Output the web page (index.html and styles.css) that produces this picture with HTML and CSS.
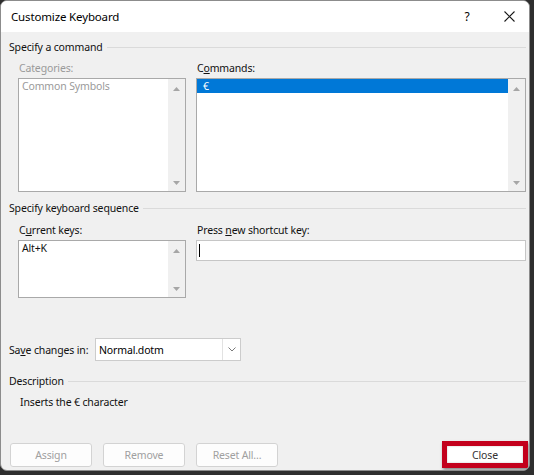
FILE: index.html
```html
<!DOCTYPE html>
<html>
<head>
<meta charset="utf-8">
<link rel="stylesheet" href="styles.css">
</head>
<body>
<div class="window">
  <div class="titlebar">
    <span class="title">Customize Keyboard</span>
    <span class="help">?</span>
    <span class="closex"><svg width="11" height="11" viewBox="0 0 11 11"><path d="M0.5 0.5L10.5 10.5M10.5 0.5L0.5 10.5" stroke="#1a1a1a" stroke-width="1.1" fill="none"/></svg></span>
  </div>
  <div class="content">
    <div class="group g1"><span>Specify a command</span><div class="rule"></div></div>
    <div class="cols">
      <div class="col left">
        <div class="label disabled">Categories:</div>
        <div class="listbox tall">
          <div class="items"><div class="item disabled">Common Symbols</div></div>
          <div class="scroll">
            <svg width="7" height="4" viewBox="0 0 7 4"><path d="M0 4L3.5 0L7 4Z" fill="#a6a6a6"/></svg>
            <svg width="7" height="4" viewBox="0 0 7 4"><path d="M0 0L3.5 4L7 0Z" fill="#a6a6a6"/></svg>
          </div>
        </div>
      </div>
      <div class="col right">
        <div class="label">C<u>o</u>mmands:</div>
        <div class="listbox tall">
          <div class="items"><div class="item sel">€</div></div>
          <div class="scroll">
            <svg width="7" height="4" viewBox="0 0 7 4"><path d="M0 4L3.5 0L7 4Z" fill="#a6a6a6"/></svg>
            <svg width="7" height="4" viewBox="0 0 7 4"><path d="M0 0L3.5 4L7 0Z" fill="#a6a6a6"/></svg>
          </div>
        </div>
      </div>
    </div>
    <div class="group g2"><span>Specify keyboard sequence</span><div class="rule"></div></div>
    <div class="cols">
      <div class="col left">
        <div class="label l2">C<u>u</u>rrent keys:</div>
        <div class="listbox short">
          <div class="items"><div class="item">Alt+K</div></div>
          <div class="scroll">
            <svg width="7" height="4" viewBox="0 0 7 4"><path d="M0 4L3.5 0L7 4Z" fill="#a6a6a6"/></svg>
            <svg width="7" height="4" viewBox="0 0 7 4"><path d="M0 0L3.5 4L7 0Z" fill="#a6a6a6"/></svg>
          </div>
        </div>
      </div>
      <div class="col right">
        <div class="label l2">Press <u>n</u>ew shortcut key:</div>
        <div class="input"><span class="caret"></span></div>
      </div>
    </div>
    <div class="saverow">
      <span class="savelabel">Sa<u>v</u>e changes in:</span>
      <div class="dropdown">
        <span class="ddtext">Normal.dotm</span>
        <span class="ddbtn"><svg width="8" height="5" viewBox="0 0 8 5"><path d="M0.5 0.5L4 4L7.5 0.5" stroke="#7a7a7a" stroke-width="1" fill="none"/></svg></span>
      </div>
    </div>
    <div class="group g3"><span>Description</span><div class="rule"></div></div>
    <div class="desc">Inserts the € character</div>
    <div class="buttons">
      <button class="btn disabled">Assign</button>
      <button class="btn disabled">Remove</button>
      <button class="btn disabled">Reset All...</button>
      <div class="highlight"><button class="btn close">Close</button></div>
    </div>
  </div>
</div>
</body>
</html>
```

FILE: styles.css
```css
html, body {
  margin: 0;
  padding: 0;
}
body {
  width: 534px;
  height: 475px;
  background: #2e2e2e;
  font-family: "Noto Sans", "DejaVu Sans", sans-serif;
  font-size: 10.5px;
  letter-spacing: -0.15px;
  color: #111;
  overflow: hidden;
}
.window {
  width: 528px;
  height: 469px;
  background: #f0f0f0;
  border: 1px solid #8c8c8c;
  border-radius: 7px;
  overflow: hidden;
}
.titlebar {
  height: 31px;
  background: #ffffff;
  display: flex;
  align-items: center;
}
.title {
  font-size: 11.5px;
  padding-left: 10px;
  flex: 1;
  color: #000;
  margin-top: -1px;
}
.help {
  font-size: 12px;
  width: 14px;
  text-align: center;
  margin-right: 30px;
  color: #000;
}
.closex {
  display: flex;
  margin-right: 14px;
}
.content {
  padding: 0 3px 0 8px;
}
.group {
  display: flex;
  align-items: center;
  height: 16px;
}
.group .rule {
  flex: 1;
  border-top: 1px solid #dadada;
  margin-left: 4px;
}
.g1 { margin-top: 7px; }
.g2 { margin-top: 8px; }
.g3 { margin-top: 12px; }
.cols {
  display: flex;
  gap: 10px;
  padding-left: 9px;
  align-items: flex-start;
}
.col.left { width: 168px; }
.col.right { flex: 1; }
.label {
  height: 14px;
  line-height: 14px;
  margin-top: 6px;
  margin-bottom: 3px;
  padding-left: 1px;
  white-space: nowrap;
}
.label.l2 { margin-top: 7px; margin-bottom: 3px; }
.disabled { color: #9a9a9a; }
.listbox {
  box-sizing: border-box;
  border: 1px solid #a9a9a9;
  background: #fff;
  display: flex;
}
.listbox.tall { height: 114px; }
.listbox.short { height: 58px; }
.items {
  flex: 1;
}
.item {
  height: 14px;
  line-height: 14px;
  padding-left: 3px;
}
.item.sel {
  background: #0078d7;
  color: #fff;
  padding-left: 6px;
}
.scroll {
  width: 17px;
  background: #f0f0f0;
  display: flex;
  flex-direction: column;
  justify-content: space-between;
  align-items: center;
  padding: 8px 0 6px;
  box-sizing: border-box;
}
.input {
  box-sizing: border-box;
  height: 21px;
  background: #fff;
  border: 1px solid #c6c6c6;
  display: flex;
  align-items: center;
  padding-left: 2px;
}
.caret {
  width: 1px;
  height: 13px;
  background: #000;
}
.saverow {
  display: flex;
  align-items: center;
  margin-top: 40px;
  height: 23px;
}
.savelabel {
  width: 86px;
  white-space: nowrap;
}
.dropdown {
  box-sizing: border-box;
  width: 146px;
  height: 23px;
  background: #fff;
  border: 1px solid #cccccc;
  display: flex;
  align-items: center;
}
.ddtext {
  flex: 1;
  padding-left: 3px;
  color: #000;
}
.ddbtn {
  width: 17px;
  height: 100%;
  border-left: 1px solid #e2e2e2;
  display: flex;
  align-items: center;
  justify-content: center;
}
.desc {
  margin-top: 6px;
  height: 14px;
  line-height: 14px;
  padding-left: 11px;
}
.buttons {
  display: flex;
  align-items: center;
  gap: 11px;
  margin-top: 32px;
  height: 27px;
  padding-left: 1px;
}
.btn {
  box-sizing: border-box;
  width: 82px;
  height: 24px;
  background: #fdfdfd;
  border: 1px solid #d3d3d3;
  border-radius: 3px;
  font-family: inherit;
  font-size: 10.5px;
  letter-spacing: -0.15px;
  padding: 0;
}
.btn.disabled { color: #a0a0a0; }
.highlight {
  margin-left: auto;
  margin-right: -2px;
  box-sizing: border-box;
  width: 86px;
  height: 27px;
  border: 5px solid #c3001c;
  box-shadow: 1px 2px 3px rgba(0,0,0,0.45);
  display: flex;
}
.btn.close {
  width: 100%;
  height: 100%;
  border: none;
  border-radius: 0;
  background: #fff;
  color: #333;
  box-shadow: inset 0 0 2px rgba(0,0,0,0.25);
}
```
